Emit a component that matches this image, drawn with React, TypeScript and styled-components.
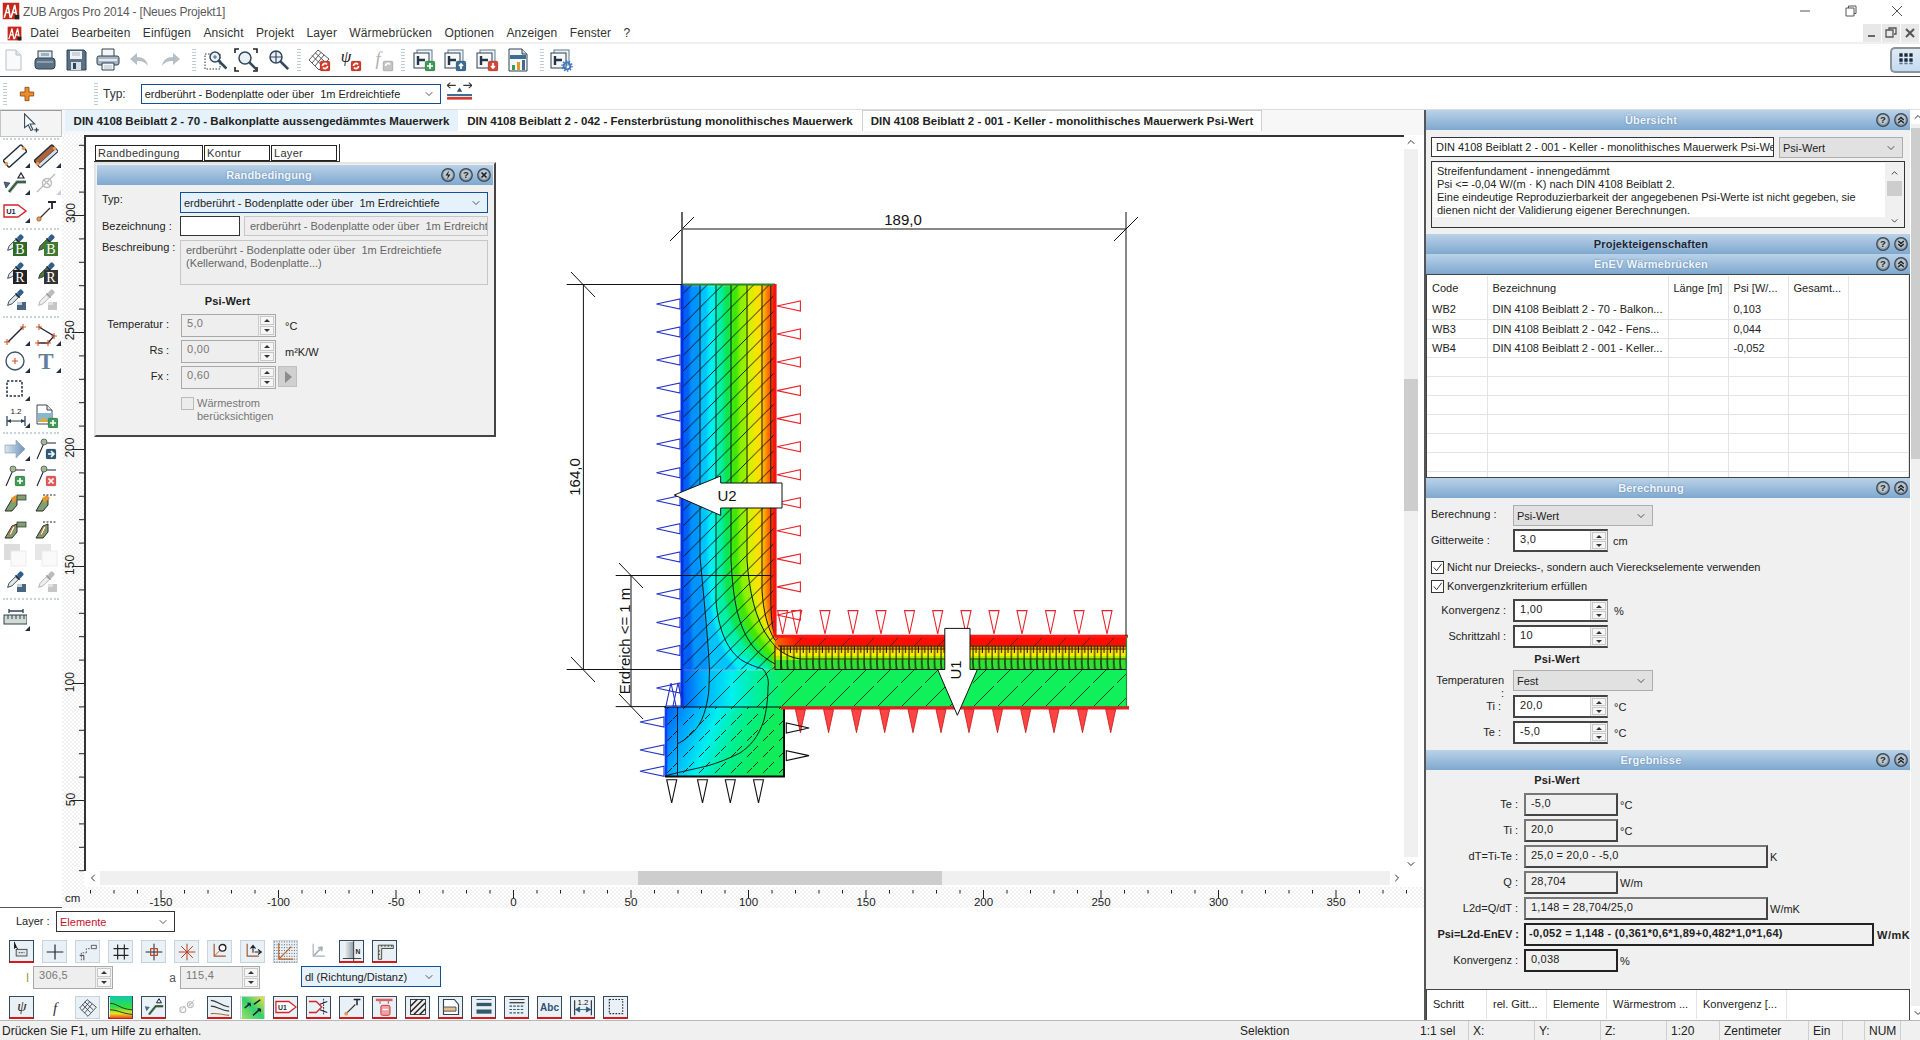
import React from "react";
import styled, { createGlobalStyle } from "styled-components";
import { ChevronDown, ChevronUp, ChevronLeft, ChevronRight } from "lucide-react";

const FONT = `"Liberation Sans", Arial, sans-serif`;

const Global = createGlobalStyle`
  html, body { margin: 0; padding: 0; background: #fff; overflow: hidden; }
  * { box-sizing: border-box; }
  body { font: 11px ${FONT}; color: #222; }
`;

/* ---------- shell ---------- */
const Root = styled.div`
  width: 1920px; height: 1040px; display: flex; flex-direction: column; overflow: hidden; background: #fff;
`;
const TitleBar = styled.div`
  height: 22px; flex: none; display: flex; align-items: center; padding-left: 2px;
`;
const TitleText = styled.span`
  margin-left: 3px; flex: 1; font-size: 12px; color: #5a5a5a; letter-spacing: -.2px; padding-top: 1px;
`;
const WinBtn = styled.div`
  width: 46px; height: 22px; display: flex; align-items: center; justify-content: center;
`;
const MenuBar = styled.div`
  height: 22px; flex: none; display: flex; align-items: center; padding: 2px 1px 0 7px; gap: 12.3px;
  border-bottom: 2px solid #f0f0f0; position: relative;
`;
const MenuLogo = styled.div`
  margin-right: -4px; width: 15px; height: 15px; flex: none;
`;
const MenuItem = styled.span`
  font-size: 12px; color: #333; letter-spacing: .12px;
`;
const MdiGroup = styled.div`
  margin-left: auto; display: flex; gap: 1px; align-self: flex-start;
`;
const MdiBtn = styled.div`
  width: 18px; height: 18px; background: #e8e8e8; display: flex; align-items: center; justify-content: center;
`;
const ToolBar = styled.div`
  height: 33px; flex: none; display: flex; align-items: center; padding-left: 1px;
  border-bottom: 1px solid #444;
`;
const ToolGroup = styled.div`
  display: flex; gap: 7.5px; align-items: center;
`;
const Gripper = styled.div<{ $l?: number; $r?: number }>`
  width: 4px; height: 24px; flex: none; margin-left: ${p => p.$l ?? 0}px; margin-right: ${p => p.$r ?? 0}px;
  background-image: radial-gradient(#c2ccd6 40%, transparent 45%);
  background-size: 2px 3px;
`;
const CalBtn = styled.div`
  margin-left: auto; width: 30px; height: 26px; border: 2px solid #8d9499; border-right: none; border-radius: 5px 0 0 5px;
  background: linear-gradient(#dfe9f3, #c3dbf2); display: flex; align-items: center; justify-content: center;
`;
const PropBar = styled.div`
  height: 33px; flex: none; display: flex; align-items: center; padding: 2px 0 0 3px;
  border-bottom: 1px solid #ddd;
`;
const PlusWrap = styled.div`
  width: 16px; height: 16px; margin: 0 0 0 12px;
`;
const PropLabel = styled.span`
  font-size: 12px; color: #333; margin: 0 15px 0 5px;
`;
const SwapWrap = styled.div`
  margin-left: 5px; flex: none;
`;

/* ---------- controls ---------- */
const Select = styled.div<{ $w: number; $h?: number; $tone?: "blue" | "focus" | "grey" | "dark" }>`
  width: ${p => p.$w}px; height: ${p => p.$h ?? 21}px; flex: none; display: flex; align-items: center;
  justify-content: space-between; padding: 0 5px 0 3px; font-size: 11px; color: #222;
  white-space: pre;
  border: ${p => (p.$tone === "grey" ? "1px solid #adadad" : p.$tone === "dark" ? "1px solid #333" : "1px solid #0f4f9e")};
  background: ${p => (p.$tone === "grey" ? "#e1e1e1" : p.$tone === "focus" ? "#e5f1fb" : "#fff")};
`;
const RedText = styled.span`
  color: #c8102e;
`;
const Spin = styled.div<{ $w?: number; $off?: boolean; $strong?: boolean }>`
  width: ${p => p.$w ?? 95}px; height: 23px; flex: none; display: flex;
  border: 1px solid ${p => (p.$off ? "#a8a8a8" : "#999")};
  ${p => (p.$strong ? "border-left: 2px solid #444; border-top: 2px solid #444; border-bottom: 2px solid #444;" : "")}
  background: ${p => (p.$off ? "#eeeeee" : "#fff")};
  color: ${p => (p.$off ? "#777" : "#222")};
`;
const SpinValue = styled.div`
  flex: 1; font-size: 11px; padding: 2px 0 0 5px; letter-spacing: .3px;
`;
const SpinBtns = styled.div`
  width: 17px; flex: none; display: flex; flex-direction: column; gap: 1px; background: #f0f0f0; border-left: 1px solid #ccc; padding: 1px;
`;
const SpinBtn = styled.div<{ $down?: boolean }>`
  flex: 1; background: #f6f6f6; border: 1px solid #c8c8c8; display: flex; align-items: center; justify-content: center;
  &::after {
    content: ""; width: 0; height: 0; border-left: 3px solid transparent; border-right: 3px solid transparent;
    ${p => (p.$down ? "border-top: 3px solid #333;" : "border-bottom: 3px solid #333;")}
  }
`;
const SpinBox: React.FC<{ v: string; w?: number; off?: boolean; strong?: boolean }> = ({ v, w, off, strong }) => (
  <Spin $w={w} $off={off} $strong={strong}>
    <SpinValue>{v}</SpinValue>
    <SpinBtns><SpinBtn /><SpinBtn $down /></SpinBtns>
  </Spin>
);
const Check = styled.div<{ $off?: boolean }>`
  width: 13px; height: 13px; flex: none; border: 1px solid ${p => (p.$off ? "#bbb" : "#333")};
  background: ${p => (p.$off ? "#ececec" : "#fff")}; display: flex; align-items: center; justify-content: center;
`;

/* ---------- layout ---------- */
const Body = styled.div`
  flex: 1; min-height: 0; display: flex;
`;
const LeftCol = styled.div`
  width: 1424px; flex: none; display: flex; flex-direction: column;
`;
const TabRow = styled.div`
  height: 25px; flex: none; display: flex; background: #f7f7f7;
`;
const PointerBtn = styled.div`
  width: 62px; height: 27px; flex: none; background: #f4f4f4; border: 1px solid #c4c4c4; border-top-color: #999;
  display: flex; align-items: center; justify-content: center; position: relative; z-index: 1;
`;
const Tab = styled.div<{ $w: number; $bg?: string; $active?: boolean }>`
  width: ${p => p.$w}px; height: 21px; flex: none; background: ${p => p.$bg ?? "#fff"}; font-weight: 700; font-size: 11.5px; color: #222;
  display: flex; align-items: center; justify-content: center; white-space: nowrap;
  ${p => (p.$active ? "border: 1px solid #cfcfcf; border-bottom: none;" : "")}
`;
const TabGap = styled.div`
  width: 3px; flex: none;
`;
const Work = styled.div`
  height: 752px; flex: none; display: flex;
`;
const VToolbar = styled.div`
  width: 62px; flex: none; padding-top: 3px; display: flex; flex-direction: column;
`;
const VSep = styled.div<{ $t?: number; $b?: number }>`
  height: 1px; flex: none; margin: ${p => p.$t ?? 2}px 3px ${p => p.$b ?? 2}px; border-top: 2px dotted #c6d2de;
`;
const VGrid = styled.div<{ $h?: number }>`
  display: grid; grid-template-columns: 30px 32px; grid-auto-rows: ${p => p.$h ?? 27.5}px; justify-items: center; align-items: center;
`;
const VCell = styled.div<{ $mark?: boolean; $dim?: boolean }>`
  width: 28px; height: 26px; display: flex; align-items: center; justify-content: center; position: relative;
  ${p => p.$mark ? `&::after {
    content: ""; position: absolute; right: -1px; bottom: 1px; width: 0; height: 0;
    border-left: 5px solid transparent; border-bottom: 5px solid ${p.$dim ? "#ccd" : "#1f2c44"};
  }` : ""}
`;
const RulerBg = styled.div`
  background-color: #fff;
  background-image: conic-gradient(#f2f2f2 25%, #fff 0 50%, #f2f2f2 0 75%, #fff 0);
  background-size: 4px 4px;
`;
const VRulerBox = styled(RulerBg)`
  width: 22px; flex: none;
`;
const CanvasCol = styled.div`
  flex: 1; display: flex; flex-direction: column; min-width: 0;
`;
const CanvasRow = styled.div`
  flex: 1; min-height: 0; display: flex; padding-right: 6px;
`;
const Canvas = styled.div`
  flex: 1; position: relative; background: #fff; border-left: 2px solid #333; border-top: 2px solid #333; overflow: hidden;
`;
const VScroll = styled.div`
  width: 14px; flex: none; display: flex; flex-direction: column; align-items: center; background: #fff; color: #333;
`;
const ScrollBtn = styled.div`
  height: 14px; width: 14px; flex: none; display: flex; align-items: center; justify-content: center;
`;
const Track = styled.div<{ $v?: boolean; $start: number; $len: number }>`
  flex: 1; position: relative; align-self: stretch; background: #f0f0f0;
  &::after {
    content: ""; position: absolute; background: #cdcdcd;
    ${p => p.$v
      ? `left: 0; right: 0; top: ${p.$start}px; height: ${p.$len}px;`
      : `top: 0; bottom: 0; left: ${p.$start}px; width: ${p.$len}px;`}
  }
`;
const HScroll = styled.div`
  height: 14px; flex: none; display: flex; margin: 0 20px 2px 2px; color: #333;
`;
const HRulerRow = styled.div`
  height: 21px; flex: none; display: flex;
`;
const RulerStub = styled.div`
  width: 62px; flex: none; border-bottom: 1px solid #555;
`;
const HRulerBox = styled(RulerBg)`
  flex: 1;
`;
const LayerRow = styled.div`
  height: 32px; flex: none; display: flex; align-items: flex-start; padding: 3px 0 0 16px;
`;
const LayerLabel = styled.span`
  font-size: 11px; margin: 4px 7px 0 0; color: #222; width: 33px; white-space: nowrap;
`;
const BtnRow = styled.div<{ $h: number }>`
  height: ${p => p.$h}px; flex: none; display: flex; align-items: flex-start; gap: 8px; padding-left: 9px;
  position: relative;
`;
const SmallBtn = styled.div<{ $on?: boolean; $flat?: boolean }>`
  width: 25px; height: 23px; flex: none; display: flex; align-items: center; justify-content: center;
  ${p => p.$flat ? "" : `background: #eaf1f6; border: 1px solid ${p.$on ? "#34495a" : "#c8d4dc"};`}
  ${p => (p.$on ? "border-bottom: 2px solid #d61a1a;" : "")}
`;
const InputRow = styled.div`
  height: 30px; flex: none; display: flex; align-items: flex-start;
`;
const InputTag = styled.span<{ $w: number; $c?: string }>`
  width: ${p => p.$w}px; flex: none; text-align: right; padding: 5px 4px 0 0; font-size: 12px; color: ${p => p.$c ?? "#555"};
`;

/* ---------- floating panel ---------- */
const Floating = styled.div`
  position: absolute; left: 8px; top: 7px; width: 402px; z-index: 2;
`;
const InnerTabs = styled.div`
  display: flex; gap: 1px; height: 18px; padding: 1px; border-right: 1px solid #333; border-bottom: 1px solid #333; width: 246px;
`;
const InnerTab = styled.div<{ $w: number }>`
  width: ${p => p.$w}px; height: 16px; flex: none; border: 1px solid #222; background: #fff; font-size: 11px; padding: 1px 2px; letter-spacing: .3px; color: #333;
`;
const Panel = styled.div`
  width: 402px; height: 275px; background: #f0f0f0; border: 2px solid #e4e4e4; border-right-color: #444; border-bottom-color: #444;
  padding: 1px; display: flex; flex-direction: column;
`;
const Header = styled.div<{ $h?: number }>`
  height: ${p => p.$h ?? 20}px; flex: none; display: flex; align-items: center; padding-right: 2px;
  background: linear-gradient(#bad2e8, #7fa8cf);
`;
const HeaderTitle = styled.div<{ $dark?: boolean }>`
  flex: 1; text-align: center; font-weight: 700; font-size: 11px;
  color: ${p => (p.$dark ? "#1c2733" : "#f0f5fa")};
  text-shadow: ${p => (p.$dark ? "0 0 2px #c8dbee" : "0 0 2px #5b82a8")};
  letter-spacing: .15px;
`;
const HeaderIcons = styled.div`
  display: flex; gap: 4px; align-items: center;
`;
const PanelBody = styled.div`
  padding: 7px 5px 0 5px; display: flex; flex-direction: column; color: #222;
`;
const PanelRow = styled.div<{ $t?: number }>`
  display: flex; align-items: flex-start; margin-top: ${p => p.$t ?? 0}px;
`;
const PanelLabel = styled.div<{ $w?: number; $right?: boolean; $t?: number }>`
  width: ${p => p.$w ?? 78}px; flex: none; padding-top: ${p => p.$t ?? 4}px; font-size: 11px;
  text-align: ${p => (p.$right ? "right" : "left")}; white-space: nowrap;
`;
const GreyField = styled.div<{ $w: number; $h?: number; $white?: boolean; $l?: number }>`
  width: ${p => p.$w}px; height: ${p => p.$h ?? 20}px; flex: none; overflow: hidden; white-space: pre;
  margin-left: ${p => p.$l ?? 0}px;
  border: 1px solid ${p => (p.$white ? "#333" : "#c6c6c6")}; background: ${p => (p.$white ? "#fff" : "#eeeeee")};
  color: #666; font-size: 11px; padding: 3px 5px; line-height: 13px;
`;
const BoldCenter = styled.div<{ $w: number; $t: number; $h?: number; $l?: number }>`
  width: ${p => p.$w}px; text-align: center; font-weight: 700; font-size: 11px; margin-top: ${p => p.$t}px;
  margin-left: ${p => p.$l ?? 0}px; height: ${p => p.$h ?? 13}px; line-height: 13px;
  letter-spacing: .15px;
`;
const UnitText = styled.span<{ $l?: number; $t?: number; $b?: boolean }>`
  margin-left: ${p => p.$l ?? 9}px; padding-top: ${p => p.$t ?? 6}px; font-size: 11px; color: #222; white-space: nowrap;
  font-weight: ${p => (p.$b ? 700 : 400)}; letter-spacing: ${p => (p.$b ? ".5px" : "0")};
`;
const DimNote = styled.div`
  margin-left: 3px; color: #777; font-size: 11px; line-height: 13px;
`;
const ArrowBtn = styled.div`
  width: 19px; height: 21px; margin-left: 2px; background: #d0d0d0; border: 1px solid #c0c0c0; display: flex; align-items: center; justify-content: center;
  &::after { content: ""; border-left: 7px solid #8c8c8c; border-top: 6px solid transparent; border-bottom: 6px solid transparent; margin-left: 2px; }
`;
const SpinIndent = styled.div`
  margin-left: 12px; display: flex;
`;
const CheckIndent = styled.div`
  margin-left: 79px;
`;
const SpinGap = styled.div<{ $w?: number }>`
  width: ${p => p.$w ?? 7}px; flex: none;
`;

/* ---------- right column ---------- */
const RightCol = styled.div`
  flex: 1; display: flex; border-left: 2px solid #555; min-width: 0;
`;
const Stack = styled.div`
  width: 484px; flex: none; display: flex; flex-direction: column; background: #f0f0f0; overflow: hidden;
`;
const RightScroll = styled.div`
  flex: 1; display: flex; flex-direction: column; color: #333; margin-left: 1px;
`;
const Section = styled.div<{ $h: number }>`
  height: ${p => p.$h}px; flex: none; overflow: hidden; position: relative;
`;
const OverviewTop = styled.div`
  display: flex; gap: 5px; padding: 7px 5px 0 5px;
`;
const TextField = styled.div`
  width: 343px; height: 20px; flex: none; background: #fff; border: 1px solid #333; padding: 3px 4px; font-size: 11px; overflow: hidden; white-space: nowrap; color: #222;
`;
const DescBox = styled.div`
  margin: 3px 5px 0 5px; height: 67px; display: flex; border: 1px solid #333; background: #f0f0f0; padding: 1px;
`;
const DescText = styled.div`
  flex: 1; height: 54px; background: #fff; padding: 2px 4px; font-size: 11px; line-height: 13px; color: #222; white-space: nowrap;
`;
const DescScroll = styled.div`
  width: 17px; flex: none; display: flex; flex-direction: column; align-items: center; margin-left: 1px;
`;
const MiniThumb = styled.div`
  width: 15px; height: 17px; background: #cdcdcd; margin-top: 3px;
`;
const DataTable = styled.table`
  width: 482px; table-layout: fixed; border-collapse: collapse; background: #fff; font-size: 11px; color: #222;
`;
const TableBox = styled.div<{ $h: number }>`
  height: ${p => p.$h}px; overflow: hidden; background: #fff; border: 1px solid #444; padding-top: 1px;
`;
const Th = styled.th<{ $w?: number }>`
  ${p => (p.$w ? `width: ${p.$w}px;` : "")}
  height: 24px; font-weight: 400; text-align: left; padding: 0 0 0 5px; border-right: 1px solid #e6e6e6; white-space: nowrap; overflow: hidden;
`;
const Td = styled.td`
  height: 19px; padding: 0 0 0 5px; border-right: 1px solid #e4e4e4; border-bottom: 1px solid #e4e4e4; white-space: nowrap; overflow: hidden;
`;
const FormRow = styled.div<{ $t?: number }>`
  display: flex; align-items: flex-start; padding-left: 5px; margin-top: ${p => p.$t ?? 0}px; color: #222;
`;
const FormLabel = styled.div<{ $w: number; $right?: boolean; $t?: number; $b?: boolean; $fix?: number }>`
  width: ${p => p.$w}px; flex: none; font-size: 11px; padding-top: ${p => p.$t ?? 5}px; line-height: 13px;
  ${p => (p.$fix ? `height: ${p.$fix}px;` : "")}
  text-align: ${p => (p.$right ? "right" : "left")}; font-weight: ${p => (p.$b ? 700 : 400)}; white-space: pre-line;
`;
const CheckLabel = styled.span`
  margin-left: 3px; font-size: 11px; line-height: 13px; white-space: nowrap;
`;
const ResultBox = styled.div<{ $w: number; $strong?: boolean; $l?: number; $plain?: boolean }>`
  width: ${p => p.$w}px; height: 23px; flex: none; padding: 2px 5px; font-size: 11px; letter-spacing: .2px;
  margin-left: ${p => p.$l ?? 6}px;
  border: 2px solid ${p => (p.$strong ? "#222" : "#777")}; ${p => p.$strong ? "" : "border-right-color:#444; border-bottom-color:#444;"}
  font-weight: ${p => (p.$strong && !p.$plain ? 700 : 400)}; white-space: nowrap; ${p => (p.$strong && !p.$plain ? "padding-left: 3px; letter-spacing: .28px;" : "")}
`;
const ColsHead = styled.div`
  height: 31px; flex: none; background: #fff; border-top: 1px solid #444; border-left: 1px solid #444; border-right: 1px solid #444; display: flex;
`;
const ColHead = styled.div<{ $w: number }>`
  width: ${p => p.$w}px; flex: none; padding: 8px 0 0 6px; height: 29px; font-size: 11px; border-right: 1px solid #e4e4e4; white-space: nowrap; color: #222;
`;

/* ---------- status ---------- */
const StatusBar = styled.div`
  height: 20px; flex: none; border-top: 1px solid #b8b8b8; background: #f0f0f0; display: flex; align-items: center; font-size: 12px; color: #222;
`;
const StatusCell = styled.div<{ $w: number; $line?: boolean }>`
  width: ${p => p.$w}px; flex: none; padding-left: ${p => (p.$line ? 4 : 2)}px; height: 19px; line-height: 20px; white-space: nowrap;
  ${p => (p.$line ? "border-left: 1px solid #cfcfcf;" : "")}
`;

/* ---------- icon helpers ---------- */
const Ic: React.FC<{ s?: number; vb?: string; children: React.ReactNode }> = ({ s = 24, vb = "0 0 24 24", children }) => (
  <svg width={s} height={s} viewBox={vb} style={{ display: "block", flex: "none" }}>{children}</svg>
);
const D = "#2f4354";
const M = "#5f7a90";
const Badge: React.FC<{ c: string; g?: string; x?: number; y?: number }> = ({ c, g, x = 13, y = 13 }) => (
  <g transform={`translate(${x} ${y})`}>
    <rect width="10" height="10" rx="1.5" fill={c} stroke="#0002" />
    {g && <path d={g} stroke="#fff" strokeWidth="1.7" fill="none" />}
  </g>
);
const PLUS = "M5 2v6M2 5h6";
const CROSS = "M2.5 2.5l5 5M7.5 2.5l-5 5";
const UPG = "M5 8V3M3 5l2-2 2 2";
const DNG = "M5 2v5M3 5l2 2 2-2";
const Stacked: React.FC<{ c: string; g?: string }> = ({ c, g }) => (
  <Ic>
    <rect x="5" y="2" width="15" height="15" fill="#eef2f5" stroke={M} />
    <rect x="2" y="5" width="15" height="15" fill="#f6f8fa" stroke={D} />
    <path d="M6 8v9M6 12h7" stroke="#263545" strokeWidth="2.4" fill="none" />
    <Badge c={c} g={g} />
  </Ic>
);
const Mesh: React.FC<{ c?: string }> = ({ c = "#444" }) => (
  <g stroke={c} strokeWidth=".9" fill="none">
    <path d="M11 2L22 11 12 22 2 12zM8 4.5L18 14M5 7.5L15 17.5M14 4.5L5 15M17 7L8 18" />
  </g>
);
const Pipette: React.FC<{ c?: string; c2?: string; ghost?: boolean }> = ({ c = "#2f5f8a", c2 = "#dfe8ef", ghost }) => (
  <g transform="rotate(45 11 11)">
    <rect x="8.5" y="-1" width="5" height="6" rx="1.5" fill={ghost ? "#bbb" : c} />
    <rect x="8" y="5" width="6" height="1.8" fill={ghost ? "#999" : "#17283a"} />
    <path d="M9 7h4v9l-2 4-2-4z" fill={ghost ? "#eee" : c2} stroke={ghost ? "#aaa" : "#233"} strokeWidth=".8" />
  </g>
);
const LetterBox: React.FC<{ bg: string; l: string }> = ({ bg, l }) => (
  <g>
    <rect x="10" y="9" width="14" height="14" fill={bg} />
    <text x="17" y="21" textAnchor="middle" fontFamily={"'Liberation Serif',serif"} fontSize="14" fill="#fff">{l}</text>
  </g>
);
const WallTool: React.FC<{ fill?: string }> = ({ fill = "#fff" }) => (
  <Ic>
    <g transform="rotate(-42 12 12)">
      <rect x="0" y="7.5" width="24" height="9" rx="1" fill={fill} stroke="#1f2f3e" strokeWidth="1.5" />
      {fill !== "#fff" && <rect x="0" y="13" width="24" height="3.5" fill="#d5e0ea" stroke="#1f2f3e" strokeWidth=".6" />}
      <circle cx="0.5" cy="12" r="1.8" fill="#e8964a" /><circle cx="23.5" cy="12" r="1.8" fill="#e8964a" />
    </g>
  </Ic>
);
const CornerTool = () => (
  <Ic>
    <path d="M6 21L14 11h9" stroke="#5f8a60" strokeWidth="3" fill="none" />
    <path d="M6 21L14 11h9" stroke="#1f2f3e" strokeWidth="1" fill="none" />
    <path d="M1 11l6 1-4 5z" fill="#446a8a" stroke="#223" strokeWidth=".6" />
    <path d="M18 2l3 5h-6z" fill="none" stroke="#223" strokeWidth="1.2" />
  </Ic>
);
const GreyRoll = () => (
  <Ic><g stroke="#bcbcbc" fill="none" strokeWidth="1.4"><circle cx="13" cy="12" r="4.5" /><path d="M3 21L21 3M10 9l6 6" /></g></Ic>
);
const TagU1: React.FC<{ s?: number }> = ({ s = 24 }) => (
  <Ic s={s} vb="0 0 24 16">
    <path d="M1 2h14l8 6-8 6H1z" fill="#fff" stroke="#d5222a" strokeWidth="1.4" />
    <text x="8" y="11" textAnchor="middle" fontFamily={FONT} fontWeight="700" fontSize="7.5" fill="#1c2a3a">U1</text>
  </Ic>
);
const TLead = () => (
  <Ic>
    <path d="M5 20L16 9" stroke="#333" strokeWidth="1.3" />
    <circle cx="5" cy="20" r="2.2" fill="#e8964a" stroke="#7a4a20" strokeWidth=".6" />
    <path d="M14 3h8M18 3v7" stroke="#223" strokeWidth="1.8" fill="none" />
  </Ic>
);
const PipB: React.FC<{ l: string; bg: string; alt?: boolean }> = ({ l, bg, alt }) => (
  <Ic>
    <Pipette c="#2f5f8a" c2={alt ? "#4a7a3a" : "#e6edf3"} />
    <LetterBox bg={bg} l={l} />
  </Ic>
);
const PipS: React.FC<{ ghost?: boolean }> = ({ ghost }) => (
  <Ic>
    <Pipette ghost={ghost} />
    <rect x="14" y="14" width="9" height="8" fill={ghost ? "#c6c6c6" : "#4a6580"} />
    <rect x="14" y="14" width="5" height="3" fill={ghost ? "#e0e0e0" : "#c4d0da"} />
  </Ic>
);
const SmallX: React.FC<{ x: number; y: number }> = ({ x, y }) => (
  <path d={`M${x - 3} ${y}h6M${x} ${y - 3}v6`} stroke="#d0562a" strokeWidth="1.1" />
);
const LineTool = () => (
  <Ic><path d="M5 20L20 5" stroke="#223" strokeWidth="1.4" /><SmallX x={4} y={20} /><SmallX x={20} y={5} /></Ic>
);
const PolyTool = () => (
  <Ic><path d="M5 5l15 9-6 7H4" stroke="#223" strokeWidth="1.3" fill="none" /><SmallX x={5} y={5} /><SmallX x={20} y={14} /><SmallX x={14} y={21} /><SmallX x={4} y={21} /></Ic>
);
const CircleTool = () => (
  <Ic><circle cx="12" cy="12" r="9" fill="#fff" stroke="#3d5568" strokeWidth="1.4" /><SmallX x={12} y={12} /></Ic>
);
const DashedRect = () => (
  <Ic><rect x="4" y="4" width="15" height="15" fill="none" stroke="#1f2f3e" strokeWidth="1.5" strokeDasharray="2.4 1.6" /></Ic>
);
const DimTool = () => (
  <Ic>
    <path d="M4 12v10M22 12v10M4 17h18" stroke="#2a3d4e" strokeWidth="1.2" />
    <path d="M4 17l4-2v4zM22 17l-4-2v4z" fill="#2a3d4e" />
    <text x="13" y="10" textAnchor="middle" fontFamily={FONT} fontSize="8" fill="#222">1.2</text>
  </Ic>
);
const ImageAdd = () => (
  <Ic>
    <path d="M3 1h10l5 5v14H3z" fill="#fff" stroke="#445" />
    <path d="M13 1v5h5" fill="#dde" stroke="#445" />
    <rect x="4" y="9" width="14" height="9" fill="#86b6d8" />
    <path d="M4 18l5-5 5 3 4-3v5z" fill="#d8b040" />
    <Badge c="#3f9a55" g={PLUS} x={14} y={14} />
  </Ic>
);
const BlueArrow = () => (
  <Ic>
    <defs><linearGradient id="ba" x1="0" x2="1"><stop offset="0" stopColor="#dbe6ef" /><stop offset="1" stopColor="#6d93b6" /></linearGradient></defs>
    <path d="M2 8h11V3l9 9-9 9v-5H2z" fill="url(#ba)" stroke="#7d9ab2" strokeWidth=".6" />
  </Ic>
);
const NodeLine: React.FC<{ c: string; g: string }> = ({ c, g }) => (
  <Ic>
    <path d="M3 22L10 6h12" stroke="#223" strokeWidth="1.1" fill="none" />
    <circle cx="10" cy="5" r="3" fill="#9dbb8c" stroke="#445" strokeWidth=".7" />
    <Badge c={c} g={g} x={12} y={12} />
  </Ic>
);
const Bend: React.FC<{ dashed?: boolean; slice?: boolean }> = ({ dashed, slice }) => (
  <Ic>
    <path d="M2 21l7-12 5-2v8l-5 6z" fill="#7f9f70" stroke="#2a2a2a" strokeWidth="1" />
    {slice ? <path d="M6 18l4-9 2 1-4 8z" fill="#fff" stroke="#b5602c" strokeWidth=".8" /> : <path d="M8 8l5-3 3 3-6 5z" fill="#e8942a" />}
    {dashed
      ? <path d="M9 5h14" stroke="#222" strokeDasharray="2 1.5" />
      : <rect x="14" y="5" width="9" height="5" fill="#7f9f70" stroke="#2a2a2a" strokeWidth=".7" />}
  </Ic>
);
const GhostSquares: React.FC<{ cut?: boolean }> = ({ cut }) => (
  <Ic>
    <rect x="1" y="1" width="16" height="16" fill={cut ? "#e6e6e6" : "#dcdcdc"} />
    <rect x="8" y="8" width="15" height="15" fill="#fafafa" stroke="#ececec" />
  </Ic>
);
const RulerTool = () => (
  <Ic>
    <path d="M6 4h14M6 2v4M20 2v4" stroke="#2f4354" strokeWidth="1.3" />
    <rect x="1" y="8" width="23" height="9" fill="#d2dad2" stroke="#2f4354" />
    <path d="M5 8v4M9 8v4M13 8v4M17 8v4M21 8v4" stroke="#2f4354" />
  </Ic>
);
const BigT = () => (
  <Ic>
    <text x="12" y="20" textAnchor="middle" fontFamily={"'Liberation Serif',serif"} fontWeight="700" fontSize="23" fill="#5f7f9c">T</text>
  </Ic>
);
const HIcon: React.FC<{ kind: "?" | "up" | "down" | "x" | "bolt" }> = ({ kind }) => (
  <svg width="14" height="14" viewBox="0 0 14 14" style={{ display: "block" }}>
    <circle cx="7" cy="7" r="6.3" fill="#8f9ca8" stroke="#3a4854" strokeWidth="1.2" />
    <circle cx="7" cy="6.6" r="4.6" fill="#bcc6ce" />
    {kind === "?" && <text x="7" y="10.3" textAnchor="middle" fontFamily={FONT} fontWeight="700" fontSize="9.5" fill="#1a2530">?</text>}
    {kind === "up" && <path d="M4.2 7l2.8-2.6L9.8 7M4.2 10l2.8-2.6L9.8 10" fill="none" stroke="#1a2530" strokeWidth="1.4" />}
    {kind === "down" && <path d="M4.2 4l2.8 2.6L9.8 4M4.2 7l2.8 2.6L9.8 7" fill="none" stroke="#1a2530" strokeWidth="1.4" />}
    {kind === "x" && <path d="M4.5 4.5l5 5M9.5 4.5l-5 5" fill="none" stroke="#1a2530" strokeWidth="1.7" />}
    {kind === "bolt" && <path d="M8 2.5L4.5 7.5h2.5L6 11.5l3.5-5H7z" fill="#1a2530" />}
  </svg>
);
const SectionHead: React.FC<{ title: string; dark?: boolean; collapsed?: boolean }> = ({ title, dark, collapsed }) => (
  <Header>
    <HeaderTitle $dark={dark}>{title}</HeaderTitle>
    <HeaderIcons><HIcon kind="?" /><HIcon kind={collapsed ? "down" : "up"} /></HeaderIcons>
  </Header>
);

/* ---------- top toolbar icons ---------- */
const NewDoc = () => <Ic><path d="M5 2h10l5 5v15H5z" fill="#f8fafb" stroke="#b5c1cb" /><path d="M15 2v5h5" fill="#dfe7ed" stroke="#b5c1cb" /></Ic>;
const OpenIco = () => <Ic><rect x="5" y="3" width="14" height="8" fill="#dfe6ec" stroke={D} /><rect x="8" y="5" width="8" height="3" fill="#9fb0bf" /><rect x="2" y="10" width="20" height="11" rx="3" fill="#5d7285" stroke={D} /><rect x="4" y="13" width="16" height="2" fill="#8a9fb0" /></Ic>;
const SaveIco = () => <Ic><path d="M3 2h17l2 2v18H3z" fill="#5b7084" stroke={D} /><rect x="6" y="3" width="12" height="8" fill="#eef2f5" /><path d="M8 5h8M8 7h8" stroke="#aab8c4" /><rect x="7" y="14" width="10" height="8" fill="#d6dee5" /><rect x="9" y="15" width="3" height="6" fill={D} /></Ic>;
const PrintIco = () => <Ic><path d="M6 1h12v8H6z" fill="#f4f6f8" stroke={D} /><rect x="1" y="8" width="22" height="9" rx="2" fill="#a9b5c0" stroke={D} /><rect x="3" y="11" width="18" height="2" fill="#e4e9ed" /><path d="M6 15h12v7H6z" fill="#f4f6f8" stroke={D} /><path d="M8 18h8M8 20h8" stroke="#b5c1cb" /></Ic>;
const UNDO = "M3 11l7-6v4c6 0 10 3 11 9-3-4-6-5-11-5v4z";
const UndoIco = () => <Ic><path d={UNDO} fill="#b6bec6" /></Ic>;
const RedoIco = () => <Ic><path d={UNDO} fill="#b6bec6" transform="matrix(-1 0 0 1 24 0)" /></Ic>;
const Mag: React.FC<{ x?: number; y?: number; r?: number }> = ({ x = 10, y = 10, r = 6 }) => (
  <g>
    <circle cx={x} cy={y} r={r} fill="#eaf1f6" stroke="#33485a" strokeWidth="1.5" />
    <path d={`M${x + r * 0.7} ${y + r * 0.7}L${x + r * 0.7 + 8} ${y + r * 0.7 + 8}`} stroke="#33485a" strokeWidth="2.6" />
  </g>
);
const Zoom1 = () => <Ic><rect x="2" y="6" width="15" height="15" fill="none" stroke="#333" strokeDasharray="1.5 1.5" /><Mag x={12} y={9} r={5} /><path d="M10 9h4M12 7v4" stroke="#45687f" /></Ic>;
const Zoom2 = () => <Ic><path d="M1 5V1h4M19 1h4v4M1 19v4h4M23 19v4h-4" stroke="#222" strokeWidth="1.6" fill="none" /><Mag x={11} y={10} r={6} /></Ic>;
const Zoom3 = () => <Ic><Mag x={10} y={9} r={6} /><path d="M10 3v12M4 9h12" stroke="#33485a" strokeWidth="1.2" /></Ic>;
const REFRESH = "M2.5 5a2.5 2.5 0 0 1 4.500-1.500M7.500 5a2.5 2.5 0 0 1-4.500 1.500";
const MeshIco = () => <Ic><Mesh /><Badge c="#d73c2c" g={REFRESH} /></Ic>;
const PsiIco = () => <Ic><text x="8" y="14" textAnchor="middle" fontFamily={"'Liberation Serif',serif"} fontStyle="italic" fontSize="17" fill="#222">ψ</text><Badge c="#d73c2c" g={REFRESH} /></Ic>;
const FnIco = () => <Ic><text x="8" y="17" textAnchor="middle" fontFamily={"'Liberation Serif',serif"} fontStyle="italic" fontSize="18" fill="#b0b0b0">f</text><Badge c="#c4c4c4" g="M2.5 5a2.5 2.5 0 0 1 4.5-1.5" /></Ic>;
const ChartDoc = () => <Ic><path d="M3 1h13l5 5v17H3z" fill="#f4f7fa" stroke={D} /><path d="M16 1v5h5" fill="#cdd9e2" stroke={D} /><rect x="4" y="7" width="16" height="4" fill="#3f6d92" /><rect x="6" y="17" width="3" height="5" fill="#3f9a55" /><rect x="11" y="14" width="3" height="8" fill="#e09a2a" /><rect x="16" y="12" width="3" height="10" fill="#3f6d92" /></Ic>;
const GearF = () => <Ic><rect x="5" y="2" width="15" height="15" fill="#eef2f5" stroke={M} /><rect x="2" y="5" width="15" height="15" fill="#f6f8fa" stroke={D} /><path d="M6 8v9M6 12h7" stroke="#263545" strokeWidth="2.4" /><circle cx="18" cy="18" r="3.4" fill="none" stroke="#3f78c4" strokeWidth="2" /><circle cx="18" cy="18" r="5" fill="none" stroke="#3f78c4" strokeWidth="1.4" strokeDasharray="1.5 1.6" /></Ic>;

/* ---------- bottom toolbar icons ---------- */
const Ax: React.FC<{ c?: string }> = ({ c = "#a8532a" }) => <path d="M5 2v15h14" stroke={c} strokeWidth="1.4" fill="none" />;
function CornerToolInner() {
  return (<g><path d="M6 21L14 11h9" stroke="#5f8a60" strokeWidth="3" fill="none" /><path d="M6 21L14 11h9" stroke="#111" strokeWidth=".8" fill="none" /><path d="M1 11l6 1-4 5z" fill="#446a8a" /><path d="M18 2l3 5h-6z" fill="none" stroke="#223" strokeWidth="1.2" /></g>);
}
function TLeadInner() {
  return (<g><path d="M5 20L16 9" stroke="#333" strokeWidth="1.3" /><circle cx="5" cy="20" r="2.2" fill="#e8964a" /><path d="M14 3h8M18 3v7" stroke="#223" strokeWidth="1.8" fill="none" /></g>);
}
const B1 = [
  <Ic s={20}><path d="M3 1v8l2-2 2 3" fill="#111" stroke="#111" /><rect x="5" y="10" width="13" height="8" fill="#dfe6ec" stroke="#333" /><path d="M8 14h7" stroke="#333" strokeDasharray="2 1" /></Ic>,
  <Ic s={20}><path d="M12 3v18M2 12h20" stroke="#223" strokeWidth="1.4" /></Ic>,
  <Ic s={20}><path d="M4 22v-9h6M10 13V8h4" stroke="#444" fill="none" strokeDasharray="2 1.5" /><path d="M16 4h6v4h-6z" stroke="#444" fill="none" /><path d="M2 16h5v6" stroke="#222" fill="none" /></Ic>,
  <Ic s={20}><path d="M8 3v18M16 3v18M3 8h18M3 16h18" stroke="#222" strokeWidth="1.4" /></Ic>,
  <Ic s={20}><path d="M12 2v20M2 12h20" stroke="#223" strokeWidth="1.2" /><rect x="8" y="8" width="8" height="8" fill="none" stroke="#b2401f" strokeWidth="1.4" /></Ic>,
  <Ic s={20}><path d="M12 2v20M2 12h20M5 5l14 14M19 5L5 19" stroke="#b2401f" strokeWidth="1.2" /></Ic>,
  <Ic s={20}><Ax /><circle cx="15" cy="7" r="4" fill="#fff" stroke="#222" strokeWidth="1.6" /><path d="M5 17L13 9" stroke="#a8532a" /></Ic>,
  <Ic s={20}><Ax /><path d="M12 5v8M9 8l3-4 3 4M14 12h7M18 9l4 3-4 3" stroke="#222" strokeWidth="1.3" fill="none" /></Ic>,
  <Ic s={23}><path d="M0 2h24M0 5h24M0 8h24M0 11h24M0 14h24M0 17h24M0 20h24M0 23h24" stroke="#555" strokeDasharray="1 1.6" /><path d="M5 3v17h15M5 20L18 7" stroke="#b5602c" strokeWidth="1.2" fill="none" /></Ic>,
  <Ic s={20}><Ax c="#a8b0b6" /><path d="M6 16L16 6M16 6l-5 1M16 6l-1 5" stroke="#a8b0b6" strokeWidth="2" fill="none" /></Ic>,
  <Ic s={20}><defs><linearGradient id="gc" x1="0" x2="1"><stop offset="0" stopColor="#f0f3f5" /><stop offset="1" stopColor="#8b9aa6" /></linearGradient></defs><rect x="3" y="1" width="11" height="20" fill="url(#gc)" /><path d="M14 0v24M1 21h22" stroke="#222" /><text x="19" y="15" textAnchor="middle" fontFamily={FONT} fontWeight="700" fontSize="8" fill="#222">N</text></Ic>,
  <Ic s={20}><path d="M4 5h18v4H8v13H4z" fill="#d5ddd6" stroke="#333" /><path d="M8 5v2M12 5v2M16 5v2M20 5v2M4 12h2M4 16h2" stroke="#333" /></Ic>,
];
const Map1 = () => <Ic s={22}><defs><linearGradient id="mp" x1="0" y1="0" x2="0" y2="1"><stop offset="0" stopColor="#10c8b0" /><stop offset=".5" stopColor="#30e040" /><stop offset=".8" stopColor="#f0e020" /><stop offset="1" stopColor="#e05020" /></linearGradient></defs><rect width="24" height="24" fill="url(#mp)" /><path d="M0 8c8 0 10 6 24 7M0 15c8 0 12 4 24 5" stroke="#223" fill="none" /></Ic>;
const Map2 = () => <Ic s={22}><defs><linearGradient id="mq" x1="0" y1="1" x2="1" y2="0"><stop offset="0" stopColor="#a0e060" /><stop offset=".5" stopColor="#30d070" /><stop offset="1" stopColor="#f0e040" /></linearGradient></defs><rect width="24" height="24" fill="url(#mq)" /><path d="M3 12l6-5M9 7l-3 0M9 7l0 3M12 20l8-7M20 13l-3 0M20 13l0 3M13 8l7-5" stroke="#123" strokeWidth="1.6" fill="none" /></Ic>;
const B2: { on?: boolean; flat?: boolean; n: React.ReactNode }[] = [
  { on: true, n: <Ic s={20}><text x="12" y="17" textAnchor="middle" fontFamily={"'Liberation Serif',serif"} fontStyle="italic" fontSize="18" fill="#222">ψ</text></Ic> },
  { flat: true, n: <Ic s={20}><text x="12" y="18" textAnchor="middle" fontFamily={"'Liberation Serif',serif"} fontStyle="italic" fontSize="18" fill="#333">f</text></Ic> },
  { n: <Ic s={20}><Mesh c="#223" /></Ic> },
  { on: true, n: <Map1 /> },
  { on: true, n: <Ic s={20}><CornerToolInner /></Ic> },
  { flat: true, n: <Ic s={20}><path d="M3 17l7-8M14 9l7-7" stroke="#bbb" /><circle cx="7" cy="14" r="3.5" fill="none" stroke="#bbb" strokeWidth="1.3" /><circle cx="16" cy="8" r="3.5" fill="none" stroke="#bbb" strokeWidth="1.3" /><path d="M14 6l4 4M18 6l-4 4" stroke="#bbb" /></Ic> },
  { on: true, n: <Ic s={20}><path d="M1 4c8 0 10 6 22 8M1 11c8 0 11 5 22 6" stroke="#2a3a30" strokeWidth="1.4" fill="none" /><path d="M1 20c8-1 12 1 22 2" stroke="#b06a2a" strokeWidth="1.4" fill="none" /></Ic> },
  { n: <Map2 /> },
  { on: true, n: <TagU1 s={22} /> },
  { on: true, n: <Ic s={22}><path d="M1 6h8l6 6-6 6H1" fill="none" stroke="#d5222a" strokeWidth="1.4" /><path d="M17 3v18" stroke="#223" strokeDasharray="2 1" /><path d="M13 9l8-3M13 15l8 3" stroke="#223" strokeWidth="1.2" /></Ic> },
  { on: true, n: <Ic s={20}><TLeadInner /></Ic> },
  { on: true, n: <Ic s={20}><path d="M1 2h20v3H1z" fill="#e06060" /><path d="M6 5v3M16 5v3" stroke="#444" /><rect x="7" y="10" width="11" height="12" rx="2" fill="#f0a0a0" stroke="#c02020" /><path d="M9 15h7" stroke="#fff" strokeWidth="1.6" /></Ic> },
  { on: true, n: <Ic s={20}><rect x="3" y="3" width="18" height="18" fill="#eee" stroke="#222" /><path d="M3 11L11 3M3 18L18 3M7 21L21 7M14 21l7-7" stroke="#222" strokeWidth="1.8" /></Ic> },
  { on: true, n: <Ic s={20}><path d="M3 3h13l5 6v12H3z" fill="#fff" stroke="#2f4354" strokeWidth="1.4" /><path d="M3 12h15v5H3z" fill="#e6c08c" stroke="#2f4354" /></Ic> },
  { on: true, n: <Ic s={20}><path d="M3 3h18" stroke="#2f4354" /><rect x="3" y="7" width="18" height="4" fill="#2f5a6a" /><rect x="3" y="15" width="18" height="5" fill="#2f5a6a" /></Ic> },
  { on: true, n: <Ic s={20}><path d="M3 3h18" stroke="#222" /><rect x="3" y="6" width="18" height="1.6" fill="#444" /><path d="M3 11h18M3 15h18M3 19h18" stroke="#2f5a6a" strokeWidth="1.4" strokeDasharray="3 1.5" /></Ic> },
  { on: true, n: <AbcMark>Abc</AbcMark> },
  { on: true, n: <Ic s={20}><text x="12" y="9" textAnchor="middle" fontFamily={FONT} fontSize="9.5" fill="#111">1.2</text><path d="M2 4v18M22 4v18" stroke="#223" strokeWidth="1.3" /><path d="M3 15h18M3 15l5-3v6zM21 15l-5-3v6z" stroke="#2a5a78" fill="#2a5a78" /></Ic> },
  { on: true, n: <Ic s={20}><rect x="4" y="3" width="16" height="17" fill="none" stroke="#1f2f3e" strokeWidth="1.4" strokeDasharray="2 1.6" /></Ic> },
];

/* ---------- rulers ---------- */
const VRuler = () => {
  const ticks: React.ReactNode[] = [];
  for (let i = -3; i < 32; i++) {
    const y = 215.5 + i * 23.4;
    const major = i % 5 === 0;
    ticks.push(<line key={i} x1={major ? 72 : 79} x2={84} y1={y} y2={y} stroke="#222" />);
  }
  const labels = ["300", "250", "200", "150", "100", "50"];
  return (
    <svg width="22" height="752" viewBox="62 135 22 752" style={{ display: "block" }}>
      {ticks}
      {labels.map((l, i) => {
        const y = 213 + i * 117.3;
        return <text key={l} x={74.5} y={y} transform={`rotate(-90 74.5 ${y})`} textAnchor="middle" fontFamily={FONT} fontSize="12" fill="#222">{l}</text>;
      })}
    </svg>
  );
};
const HRuler = () => {
  const ticks: React.ReactNode[] = [];
  for (let i = -18; i <= 38; i++) {
    const x = 513.5 + i * 23.5;
    const major = i % 5 === 0;
    ticks.push(<line key={i} x1={x} x2={x} y1={890} y2={major ? 898 : 893.5} stroke="#222" />);
  }
  const labels = [-150, -100, -50, 0, 50, 100, 150, 200, 250, 300, 350];
  return (
    <svg width="1362" height="21" viewBox="62 887 1362 21" style={{ display: "block" }}>
      <text x="65" y="902" fontFamily={FONT} fontSize="11.5" fill="#222">cm</text>
      {ticks}
      {labels.map(l => <text key={l} x={513.5 + (l / 10) * 23.5} y="905.5" textAnchor="middle" fontFamily={FONT} fontSize="11.5" fill="#222">{l}</text>)}
    </svg>
  );
};

/* ---------- thermal drawing ---------- */
const tri = (pts: number[][]) => pts.map(p => p.join(",")).join(" ");
type Iso = [number, number, number, number, number, number, number, number];
const ISO: Record<string, Iso> = {
  a: [700, 557, 705, 610, 708, 640, 709.5, 670],
  b: [716, 600, 718, 630, 728, 652, 766, 670],
  c: [731, 560, 733, 600, 738, 630, 775, 664],
  d: [747, 560, 749, 590, 755, 620, 775, 645],
  e: [762, 590, 763, 610, 768, 630, 775, 640],
  f: [770.8, 600, 771, 615, 772, 628, 775, 635],
};
const mix = (p: Iso, q: Iso, t: number) => p.map((v, i) => v + (q[i] - v) * t) as Iso;
const fillPath = (k: Iso) => `M680 284H${k[0]}V${k[1]}C${k[2]} ${k[3]} ${k[4]} ${k[5]} ${k[6]} ${k[7]}V672H680Z`;
const BANDS: [Iso, string][] = [
  [ISO.f, "#ff6a00"],
  [mix(ISO.e, ISO.f, 0.5), "#ffa800"],
  [ISO.e, "#ffe000"],
  [mix(ISO.d, ISO.e, 0.5), "#d8f000"],
  [ISO.d, "#90f000"],
  [mix(ISO.c, ISO.d, 0.5), "#40e800"],
  [ISO.c, "#08e650"],
  [mix(ISO.b, ISO.c, 0.5), "#00f0a8"],
  [ISO.b, "#00f0f0"],
  [mix(ISO.a, ISO.b, 0.5), "#00c4ff"],
  [ISO.a, "#0094ff"],
  [[690, 560, 691, 610, 692, 640, 693, 670], "#0060f4"],
];
const BLUE_Y = [304, 332, 360, 388, 416, 444, 472.8, 500.8, 528.8, 557, 594, 622.5, 650.5, 688];
const RED_Y = [306, 334, 362, 390.6, 418.6, 446.7, 474.7, 502.8, 530.8, 558.9, 586.9, 615];
const RED_DOWN = [782.6, 796.7, 825, 853, 881, 909.5, 937.7, 966, 994, 1022, 1050.5, 1079, 1107];
const RED_SPIKE = [800.4, 828.6, 856.5, 884.7, 913, 941, 969, 997.5, 1025.7, 1054, 1082.5, 1110.7];

const Drawing = () => (
  <svg width="1318" height="734" viewBox="86 137 1318 734" style={{ display: "block" }}>
    <defs>
      <linearGradient id="slabG" gradientUnits="userSpaceOnUse" x1="682" x2="800" y1="0" y2="0">
        <stop offset="0" stopColor="#0058f0" /><stop offset=".16" stopColor="#00a8ff" />
        <stop offset=".42" stopColor="#00f0f0" /><stop offset=".62" stopColor="#00f0a0" /><stop offset=".9" stopColor="#10f05a" /><stop offset="1" stopColor="#10f05a" />
      </linearGradient>
      <linearGradient id="footG" gradientUnits="userSpaceOnUse" x1="665" x2="785" y1="700" y2="745">
        <stop offset="0" stopColor="#0050f0" /><stop offset=".2" stopColor="#00a0ff" />
        <stop offset=".42" stopColor="#00f0f0" /><stop offset=".62" stopColor="#00f090" /><stop offset=".85" stopColor="#10ec5a" />
      </linearGradient>
      <linearGradient id="topG" gradientUnits="userSpaceOnUse" x1="775" x2="800" y1="0" y2="0">
        <stop offset="0" stopColor="#ff6a00" /><stop offset="1" stopColor="#ff0c00" />
      </linearGradient>
      <clipPath id="wallClip"><rect x="682" y="284.5" width="93" height="386" /></clipPath>
      <filter id="soft" x="-10%" y="-10%" width="120%" height="120%"><feGaussianBlur stdDeviation="1.8" /></filter>
      <pattern id="hatchWall" patternUnits="userSpaceOnUse" width="15.5" height="15.5">
        <path d="M15.5 0L0 15.5M-1 1L1 -1M14.5 16.5L16.5 14.5" stroke="#0a0a0a" strokeWidth=".9" />
      </pattern>
      <pattern id="hatchSlab" patternUnits="userSpaceOnUse" width="24" height="24">
        <path d="M24 0L13 11M10 14L0 24" stroke="#0a2a14" strokeWidth=".9" />
      </pattern>
      <pattern id="hatchFoot" patternUnits="userSpaceOnUse" width="16" height="16">
        <path d="M16 0L11 5M6 10L1 15" stroke="#0a0a0a" strokeWidth=".85" />
      </pattern>
      <pattern id="comb" patternUnits="userSpaceOnUse" x="780" y="646" width="6.4" height="24">
        <path d="M1 0v24M4 0v7" stroke="#111" strokeWidth="1" />
        <path d="M0 3h6M0 14l2.5 10" stroke="#111" strokeWidth=".6" />
      </pattern>
    </defs>

    {/* slab and foundation */}
    <rect x="682" y="669.5" width="444.5" height="37.5" fill="url(#slabG)" />
    <rect x="665" y="707" width="118.5" height="69.5" fill="url(#footG)" />

    {/* wall bands */}
    <g clipPath="url(#wallClip)">
      <g filter="url(#soft)">
        <rect x="680" y="280" width="100" height="395" fill="#ff1c00" />
        {BANDS.map(([k, c]) => <path key={c} d={fillPath(k)} fill={c} />)}
      </g>
    </g>
    <rect x="682" y="284.5" width="93" height="385" fill="url(#hatchWall)" />

    {/* slab layers */}
    <rect x="775" y="636" width="351.5" height="10" fill="url(#topG)" />
    <rect x="775" y="645.5" width="351.5" height="4.5" fill="#ff9800" />
    <rect x="775" y="650" width="351.5" height="6" fill="#ffe800" />
    <rect x="775" y="656" width="351.5" height="4" fill="#a8f000" />
    <rect x="775" y="660" width="351.5" height="9.5" fill="#30e030" />
    <rect x="780" y="646" width="346.5" height="23.5" fill="url(#comb)" />
    <path d="M778 646h348.500M775 669.5h351.500M781 646v24M775 646v24" stroke="#111" strokeWidth="1" />
    <rect x="775" y="636" width="351.5" height="10" fill="url(#hatchSlab)" opacity=".7" />
    <path d="M775 636.2h353" stroke="#ff1818" strokeWidth="3" />
    <rect x="682" y="669.5" width="444.5" height="37.5" fill="url(#hatchSlab)" />
    <rect x="665" y="707" width="118.5" height="69.5" fill="url(#hatchFoot)" />

    {/* isolines */}
    <g fill="none" stroke="#0a1a10" strokeWidth="1">
      <path d="M700 284V557C705 610 708 640 709.5 670C709 685 709 692 708 697C705 715 700 727 690 735C685 740 681 742 677 744" />
      <path d="M716 284V600C718 630 728 652 743 661C752 666 760 668 763 669C768 675 769 682 768 687C768 700 766 712 764 720C758 738 750 746 740 753C730 758 718 763 707 766C690 770 675 773 665 776" />
      <path d="M731 284V560C733 600 738 630 756 650C762 656 768 660 775 664" />
      <path d="M747 284V560C749 590 755 620 770 640C775 646 782 656 800 659H1126" />
      <path d="M762 284V590C763 610 768 630 775 640" />
      <path d="M770.8 284V600C771 615 772 628 775 635" />
    </g>

    {/* outlines */}
    <path d="M682 284.5H775" stroke="#1e8a2e" strokeWidth="2" />
    <path d="M682 284.5V707" stroke="#0030e8" strokeWidth="3" />
    <path d="M775 284V636" stroke="#f01414" strokeWidth="3.2" />
    <path d="M1126.5 636v71" stroke="#1f8a3a" strokeWidth="1.2" />
    <path d="M666 707v69.5" stroke="#0a40ff" strokeWidth="2.6" />
    <path d="M677.5 707v69.5" stroke="#0a1a30" strokeWidth="1" />
    <path d="M665 776.5H784V707" fill="none" stroke="#0a0a0a" strokeWidth="2" />
    <path d="M664 707h120" stroke="#0a0a0a" strokeWidth="1" />
    <path d="M781 706.5h348" stroke="#1fa040" strokeWidth="1" />
    <path d="M781 708h348" stroke="#ee1c1c" strokeWidth="3" />

    {/* load triangles */}
    <g fill="none" stroke="#2030c8" strokeWidth="1.1">
      {BLUE_Y.map(y => <polygon key={y} points={tri([[656.5, y], [680, y - 5], [680, y + 5]])} />)}
      {[722, 750, 771.3].map(y => <polygon key={y} points={tri([[640, y], [664, y - 5], [664, y + 5]])} />)}
      {[671, 678].map(x => <polygon key={x} points={tri([[x, 683], [x - 5, 706], [x + 5, 706]])} />)}
    </g>
    <g fill="none" stroke="#e8222a" strokeWidth="1.1">
      {RED_Y.map(y => <polygon key={y} points={tri([[777, y], [800.4, y - 5], [800.4, y + 5]])} />)}
      {RED_DOWN.map(x => <polygon key={x} points={tri([[x - 5, 610.6], [x + 5, 610.6], [x, 634]])} />)}
    </g>
    <g fill="#ff4444" stroke="#c01818" strokeWidth=".8">
      {RED_SPIKE.map(x => <polygon key={x} points={tri([[x - 5, 709.4], [x + 5, 709.4], [x, 732.7]])} />)}
    </g>
    <g fill="#fff" stroke="#111" strokeWidth="1.1">
      {[728, 755.6].map(y => <polygon key={y} points={tri([[786.3, y - 5], [786.3, y + 5], [809, y]])} fill={y === 728 ? "none" : "#fff"} />)}
      {[671.7, 702.5, 730.3, 758.5].map(x => <polygon key={x} points={tri([[x - 5, 779.7], [x + 5, 779.7], [x, 803]])} />)}
    </g>

    {/* U arrows */}
    <polygon points="674.3,495 720.7,476 720.7,483 782,483 782,508 720.7,508 720.7,515.4" fill="#fff" stroke="#111" />
    <text x="727" y="500.5" textAnchor="middle" fontFamily={FONT} fontSize="15" fill="#111">U2</text>
    <polygon points="944.8,628.4 970,628.4 970,669.5 977.4,669.5 957.4,715.3 937.7,669.5 944.8,669.5" fill="#fff" stroke="#111" />
    <text x="955.5" y="670" transform="rotate(-90 955.5 670)" textAnchor="middle" dominantBaseline="central" fontFamily={FONT} fontSize="15" fill="#111">U1</text>

    {/* dimensions */}
    <g stroke="#111" strokeWidth="1" fill="none">
      <path d="M682 229H1126M1126 212V636" />
      <path d="M670 241L694 217M1114 241L1138 217" />
      <path d="M566.7 284.5H682M566.7 669.5H682M583.4 284.5V669.5" />
      <path d="M571 272L595 297M571 657L595 682" />
      <path d="M615.7 575.5H771M615.7 706.6H666M631 575.5V706.6" />
      <path d="M619 563L643 588M619 694L643 719" />
    </g>
    <path d="M682 212V284" stroke="#555" strokeWidth="1.8" />
    <text x="903" y="225" textAnchor="middle" fontFamily={FONT} fontSize="15" fill="#111">189,0</text>
    <text x="580" y="477" transform="rotate(-90 580 477)" textAnchor="middle" fontFamily={FONT} fontSize="15" fill="#111">164,0</text>
    <text x="630" y="641" transform="rotate(-90 630 641)" textAnchor="middle" fontFamily={FONT} fontSize="15" fill="#111">Erdreich &lt;= 1 m</text>
  </svg>
);

/* ---------- data ---------- */
const MENU = ["Datei", "Bearbeiten", "Einfügen", "Ansicht", "Projekt", "Layer", "Wärmebrücken", "Optionen", "Anzeigen", "Fenster", "?"];
const ROWS = [
  ["WB2", "DIN 4108 Beiblatt 2 - 70 - Balkon...", "0,103"],
  ["WB3", "DIN 4108 Beiblatt 2 - 042 - Fens...", "0,044"],
  ["WB4", "DIN 4108 Beiblatt 2 - 001 - Keller...", "-0,052"],
  ["", "", ""], ["", "", ""], ["", "", ""], ["", "", ""], ["", "", ""], ["", "", ""], ["", "", ""],
];
const RESULTS: [string, string, number, string][] = [
  ["Te :", "-5,0", 94, "°C"],
  ["Ti :", "20,0", 94, "°C"],
  ["dT=Ti-Te :", "25,0 = 20,0 - -5,0", 244, "K"],
  ["Q :", "28,704", 94, "W/m"],
  ["L2d=Q/dT :", "1,148 = 28,704/25,0", 244, "W/mK"],
];
const LogoMark: React.FC<{ s?: number }> = ({ s = 18 }) => (
  <Ic s={s}>
    <rect x="1" y="1" width="22" height="22" fill="#c8281c" />
    <path d="M3 21L8 4l3 17M12 21l5-17 3 17M5 14h4M14 14h4" stroke="#fff" strokeWidth="2" fill="none" />
    <rect x="17" y="17" width="6" height="6" fill="#222" />
  </Ic>
);
const TickMark = () => (
  <Ic s={11} vb="0 0 12 12"><path d="M2 6l3 3.500L10.500 2" fill="none" stroke="#222" /></Ic>
);
const Dropdown = () => <ChevronDown size={12} strokeWidth={1.5} />;

export default function App() {
  return (
    <Root>
      <Global />
      <TitleBar>
        <LogoMark />
        <TitleText>ZUB Argos Pro 2014 - [Neues Projekt1]</TitleText>
        <WinBtn><Ic s={12} vb="0 0 12 12"><path d="M1 6h10" stroke="#555" /></Ic></WinBtn>
        <WinBtn><Ic s={12} vb="0 0 12 12"><path d="M3.5 3V1h7.5v7.5H9M1 3h8v8H1z" fill="none" stroke="#555" /></Ic></WinBtn>
        <WinBtn><Ic s={12} vb="0 0 12 12"><path d="M1 1l10 10M11 1L1 11" stroke="#555" /></Ic></WinBtn>
      </TitleBar>
      <MenuBar>
        <MenuLogo><LogoMark s={15} /></MenuLogo>
        {MENU.map(m => <MenuItem key={m}>{m}</MenuItem>)}
        <MdiGroup>
          <MdiBtn><Ic s={12} vb="0 0 12 12"><path d="M2 9h7" stroke="#666" strokeWidth="2" /></Ic></MdiBtn>
          <MdiBtn><Ic s={12} vb="0 0 12 12"><path d="M4 3V1h7v6H9M1 3h7v7H1z" fill="none" stroke="#555" strokeWidth="1.3" /></Ic></MdiBtn>
          <MdiBtn><Ic s={12} vb="0 0 12 12"><path d="M2 2l8 8M10 2l-8 8" stroke="#555" strokeWidth="2" /></Ic></MdiBtn>
        </MdiGroup>
      </MenuBar>
      <ToolBar>
        <ToolGroup><NewDoc /><OpenIco /><SaveIco /><PrintIco /><UndoIco /><RedoIco /></ToolGroup>
        <Gripper $l={9} $r={7} />
        <ToolGroup><Zoom1 /><Zoom2 /><Zoom3 /></ToolGroup>
        <Gripper $l={7} $r={6} />
        <ToolGroup><MeshIco /><PsiIco /><FnIco /></ToolGroup>
        <Gripper $l={7} $r={7} />
        <ToolGroup><Stacked c="#3f9a55" g={PLUS} /><Stacked c="#3f6d92" g={UPG} /><Stacked c="#d2493a" g={DNG} /><ChartDoc /></ToolGroup>
        <Gripper $l={10} $r={5} />
        <GearF />
        <CalBtn>
          <Ic s={20}><path d="M3 5h18M3 10h18M3 15h18" stroke="#fff" strokeWidth="1" /><path d="M4 4h4v4H4zM10 4h4v4h-4zM16 4h4v4h-4zM4 10h4v4H4zM10 10h4v4h-4zM16 10h4v4h-4z" fill="#1a2a3a" /><path d="M4 16h16" stroke="#5a7a9a" strokeWidth="2" strokeDasharray="4 2" /></Ic>
        </CalBtn>
      </ToolBar>
      <PropBar>
        <Gripper />
        <PlusWrap><Ic s={16}><path d="M9 2h6v7h7v6h-7v7H9v-7H2V9h7z" fill="#ee8a2c" stroke="#7a4510" strokeWidth="1.2" /></Ic></PlusWrap>
        <Gripper $l={59} />
        <PropLabel>Typ:</PropLabel>
        <Select $w={300} $h={20} $tone="blue">
          {"erdberührt - Bodenplatte oder über  1m Erdreichtiefe"}
          <Dropdown />
        </Select>
        <SwapWrap>
          <Ic s={26}>
            <path d="M1 4h8M1 4l3-2.5M1 4l3 2.5M24 4h-8M24 4l-3-2.5M24 4l-3 2.5" stroke="#333" fill="none" />
            <path d="M12.5 6l2.5 4h-5z" fill="#33506e" />
            <path d="M1 13h23" stroke="#3f6d92" strokeWidth="2" /><path d="M1 16h23" stroke="#d2392a" strokeWidth="2.4" />
          </Ic>
        </SwapWrap>
      </PropBar>
      <Body>
        <LeftCol>
          <TabRow>
            <PointerBtn>
              <Ic s={22}><path d="M5 1v15l4-3 3 6 2-1-3-6h5z" fill="#fff" stroke="#34495a" strokeWidth="1.2" /><path d="M18 16v5M15.500 18.500h5" stroke="#34495a" strokeWidth="1.4" /></Ic>
            </PointerBtn>
            <TabGap />
            <Tab $w={393} $bg="#e5f1fb">DIN 4108 Beiblatt 2 - 70 - Balkonplatte aussengedämmtes Mauerwerk</Tab>
            <Tab $w={404}>DIN 4108 Beiblatt 2 - 042 - Fensterbrüstung monolithisches Mauerwerk</Tab>
            <Tab $w={400} $active>DIN 4108 Beiblatt 2 - 001 - Keller - monolithisches Mauerwerk Psi-Wert</Tab>
          </TabRow>
          <Work>
            <VToolbar>
              <VSep $t={0} $b={2} />
              <VGrid>
                <VCell $mark><WallTool /></VCell><VCell $mark><WallTool fill="#b0623a" /></VCell>
                <VCell $mark><CornerTool /></VCell><VCell $mark $dim><GreyRoll /></VCell>
                <VCell $mark><TagU1 /></VCell><VCell><TLead /></VCell>
              </VGrid>
              <VSep $t={3} />
              <VGrid>
                <VCell><PipB l="B" bg="#2f6a25" /></VCell><VCell><PipB l="B" bg="#3f7a30" alt /></VCell>
                <VCell><PipB l="R" bg="#222" /></VCell><VCell><PipB l="R" bg="#333" alt /></VCell>
                <VCell><PipS /></VCell><VCell><PipS ghost /></VCell>
              </VGrid>
              <VSep />
              <VGrid>
                <VCell $mark><LineTool /></VCell><VCell $mark><PolyTool /></VCell>
                <VCell $mark><CircleTool /></VCell><VCell $mark><BigT /></VCell>
                <VCell $mark><DashedRect /></VCell><VCell />
                <VCell $mark><DimTool /></VCell><VCell><ImageAdd /></VCell>
              </VGrid>
              <VSep $b={2} />
              <VGrid $h={26.5}>
                <VCell $mark><BlueArrow /></VCell><VCell><NodeLine c="#2f5a78" g="M2 5h6M5 2l3 3-3 3" /></VCell>
                <VCell><NodeLine c="#3f9a55" g={PLUS} /></VCell><VCell><NodeLine c="#e85a5a" g={CROSS} /></VCell>
                <VCell><Bend /></VCell><VCell><Bend dashed /></VCell>
                <VCell><Bend slice /></VCell><VCell><Bend slice dashed /></VCell>
                <VCell><GhostSquares /></VCell><VCell><GhostSquares cut /></VCell>
                <VCell><PipS /></VCell><VCell><PipS ghost /></VCell>
              </VGrid>
              <VSep $t={3} $b={5} />
              <VGrid>
                <VCell $mark><RulerTool /></VCell>
              </VGrid>
            </VToolbar>
            <VRulerBox><VRuler /></VRulerBox>
            <CanvasCol>
              <CanvasRow>
                <Canvas>
                  <Drawing />
                  <Floating>
                    <InnerTabs>
                      <InnerTab $w={108}>Randbedingung</InnerTab>
                      <InnerTab $w={66}>Kontur</InnerTab>
                      <InnerTab $w={66}>Layer</InnerTab>
                    </InnerTabs>
                    <Panel>
                      <Header>
                        <HeaderTitle>Randbedingung</HeaderTitle>
                        <HeaderIcons><HIcon kind="bolt" /><HIcon kind="?" /><HIcon kind="x" /></HeaderIcons>
                      </Header>
                      <PanelBody>
                        <PanelRow>
                          <PanelLabel $t={1}>Typ:</PanelLabel>
                          <Select $w={308} $tone="focus">
                            {"erdberührt - Bodenplatte oder über  1m Erdreichtiefe"}
                            <Dropdown />
                          </Select>
                        </PanelRow>
                        <PanelRow $t={3}>
                          <PanelLabel>Bezeichnung :</PanelLabel>
                          <GreyField $w={60} $white />
                          <GreyField $w={244} $l={4}>{"erdberührt - Bodenplatte oder über  1m Erdreichti"}</GreyField>
                        </PanelRow>
                        <PanelRow $t={4}>
                          <PanelLabel $t={1}>Beschreibung :</PanelLabel>
                          <GreyField $w={308} $h={45}>{"erdberührt - Bodenplatte oder über  1m Erdreichtiefe\n(Kellerwand, Bodenplatte...)"}</GreyField>
                        </PanelRow>
                        <BoldCenter $w={251} $t={10}>Psi-Wert</BoldCenter>
                        <PanelRow $t={6}>
                          <PanelLabel $w={67} $right>Temperatur :</PanelLabel>
                          <SpinIndent><SpinBox v="5,0" off /></SpinIndent>
                          <UnitText>°C</UnitText>
                        </PanelRow>
                        <PanelRow $t={3}>
                          <PanelLabel $w={67} $right>Rs :</PanelLabel>
                          <SpinIndent><SpinBox v="0,00" off /></SpinIndent>
                          <UnitText>m²K/W</UnitText>
                        </PanelRow>
                        <PanelRow $t={3}>
                          <PanelLabel $w={67} $right>Fx :</PanelLabel>
                          <SpinIndent><SpinBox v="0,60" off /></SpinIndent>
                          <ArrowBtn />
                        </PanelRow>
                        <PanelRow $t={8}>
                          <CheckIndent><Check $off /></CheckIndent>
                          <DimNote>Wärmestrom<br />berücksichtigen</DimNote>
                        </PanelRow>
                      </PanelBody>
                    </Panel>
                  </Floating>
                </Canvas>
                <VScroll>
                  <ScrollBtn><ChevronUp size={12} strokeWidth={2} /></ScrollBtn>
                  <Track $v $start={230} $len={132} />
                  <ScrollBtn><ChevronDown size={12} strokeWidth={2} /></ScrollBtn>
                </VScroll>
              </CanvasRow>
              <HScroll>
                <ScrollBtn><ChevronLeft size={12} strokeWidth={2} /></ScrollBtn>
                <Track $start={538} $len={304} />
                <ScrollBtn><ChevronRight size={12} strokeWidth={2} /></ScrollBtn>
              </HScroll>
            </CanvasCol>
          </Work>
          <HRulerRow>
            <RulerStub />
            <HRulerBox><HRuler /></HRulerBox>
          </HRulerRow>
          <LayerRow>
            <LayerLabel>Layer :</LayerLabel>
            <Select $w={119} $tone="dark"><RedText>Elemente</RedText><Dropdown /></Select>
          </LayerRow>
          <BtnRow $h={26}>
            {B1.map((n, i) => <SmallBtn key={i} $on={i === 0 || i >= 10} $flat={i === 9}>{n}</SmallBtn>)}
          </BtnRow>
          <InputRow>
            <InputTag $w={33} $c="#a08a3a">l</InputTag>
            <SpinBox v="306,5" w={80} off />
            <InputTag $w={67}>a</InputTag>
            <SpinBox v="115,4" w={80} off />
            <SelectGap><Select $w={140} $tone="focus">dl (Richtung/Distanz)<Dropdown /></Select></SelectGap>
          </InputRow>
          <BtnRow $h={24}>
            {B2.map((b, i) => <SmallBtn key={i} $on={b.on} $flat={b.flat}>{b.n}</SmallBtn>)}
          </BtnRow>
        </LeftCol>
        <RightCol>
          <Stack>
            <SectionHead title="Übersicht" />
            <Section $h={104}>
              <OverviewTop>
                <TextField>DIN 4108 Beiblatt 2 - 001 - Keller - monolithisches Mauerwerk Psi-Wert</TextField>
                <Select $w={124} $tone="grey">Psi-Wert<Dropdown /></Select>
              </OverviewTop>
              <DescBox>
                <DescText>
                  Streifenfundament - innengedämmt<br />
                  Psi &lt;= -0,04 W/(m · K) nach DIN 4108 Beiblatt 2.<br />
                  Eine eindeutige Reproduzierbarkeit der angegebenen Psi-Werte ist nicht gegeben, sie<br />
                  dienen nicht der Validierung eigener Berechnungen.
                </DescText>
                <DescScroll>
                  <ChevronUp size={11} strokeWidth={2} style={{ marginTop: 5 }} />
                  <MiniThumb />
                  <ChevronDown size={11} strokeWidth={2} style={{ marginTop: 20 }} />
                </DescScroll>
              </DescBox>
            </Section>
            <SectionHead title="Projekteigenschaften" dark collapsed />
            <SectionHead title="EnEV Wärmebrücken" />
            <TableBox $h={204}>
              <DataTable>
                <thead>
                  <tr>
                    <Th $w={60}>Code</Th><Th $w={181}>Bezeichnung</Th><Th $w={60}>Länge [m]</Th><Th $w={60}>Psi [W/...</Th><Th $w={60}>Gesamt...</Th><Th />
                  </tr>
                </thead>
                <tbody>
                  {ROWS.map((r, i) => (
                    <tr key={i}><Td>{r[0]}</Td><Td>{r[1]}</Td><Td /><Td>{r[2]}</Td><Td /><Td /></tr>
                  ))}
                </tbody>
              </DataTable>
            </TableBox>
            <SectionHead title="Berechnung" />
            <Section $h={252}>
              <FormRow $t={7}>
                <FormLabel $w={82} $t={3}>Berechnung :</FormLabel>
                <Select $w={140} $tone="grey">Psi-Wert<Dropdown /></Select>
              </FormRow>
              <FormRow $t={3}>
                <FormLabel $w={82}>Gitterweite :</FormLabel>
                <SpinBox v="3,0" strong />
                <UnitText $l={5} $t={6}>cm</UnitText>
              </FormRow>
              <FormRow $t={9}>
                <Check><TickMark /></Check>
                <CheckLabel>Nicht nur Dreiecks-, sondern auch Viereckselemente verwenden</CheckLabel>
              </FormRow>
              <FormRow $t={6}>
                <Check><TickMark /></Check>
                <CheckLabel>Konvergenzkriterium erfüllen</CheckLabel>
              </FormRow>
              <FormRow $t={6}>
                <FormLabel $w={75} $right>Konvergenz :</FormLabel>
                <SpinGap />
                <SpinBox v="1,00" strong />
                <UnitText $l={6} $t={6}>%</UnitText>
              </FormRow>
              <FormRow $t={3}>
                <FormLabel $w={75} $right>Schrittzahl :</FormLabel>
                <SpinGap />
                <SpinBox v="10" strong />
              </FormRow>
              <FormRow $t={5}>
                <BoldCenter $w={170} $t={0} $l={41} $h={17}>Psi-Wert</BoldCenter>
              </FormRow>
              <FormRow>
                <FormLabel $w={73} $right $t={4} $fix={21}>{"Temperaturen\n:"}</FormLabel>
                <SpinGap $w={9} />
                <Select $w={140} $tone="grey">Fest<Dropdown /></Select>
              </FormRow>
              <FormRow $t={4}>
                <FormLabel $w={70} $right>Ti :</FormLabel>
                <SpinGap $w={12} />
                <SpinBox v="20,0" strong />
                <UnitText $l={6} $t={6}>°C</UnitText>
              </FormRow>
              <FormRow $t={3}>
                <FormLabel $w={70} $right>Te :</FormLabel>
                <SpinGap $w={12} />
                <SpinBox v="-5,0" strong />
                <UnitText $l={6} $t={6}>°C</UnitText>
              </FormRow>
            </Section>
            <SectionHead title="Ergebnisse" />
            <Section $h={219}>
              <FormRow>
                <BoldCenter $w={170} $t={4} $l={41} $h={16}>Psi-Wert</BoldCenter>
              </FormRow>
              {RESULTS.map(([l, v, w, u]) => (
                <FormRow key={l} $t={3}>
                  <FormLabel $w={87} $right>{l}</FormLabel>
                  <ResultBox $w={w}>{v}</ResultBox>
                  <UnitText $l={2}>{u}</UnitText>
                </FormRow>
              ))}
              <FormRow $t={3}>
                <FormLabel $w={88} $right $b>Psi=L2d-EnEV :</FormLabel>
                <ResultBox $w={350} $strong $l={5}>-0,052 = 1,148 - (0,361*0,6*1,89+0,482*1,0*1,64)</ResultBox>
                <UnitText $l={3} $b>W/mK</UnitText>
              </FormRow>
              <FormRow $t={3}>
                <FormLabel $w={87} $right>Konvergenz :</FormLabel>
                <ResultBox $w={94} $strong $plain>0,038</ResultBox>
                <UnitText $l={2}>%</UnitText>
              </FormRow>
            </Section>
            <ColsHead>
              <ColHead $w={60}>Schritt</ColHead>
              <ColHead $w={60}>rel. Gitt...</ColHead>
              <ColHead $w={60}>Elemente</ColHead>
              <ColHead $w={90}>Wärmestrom ...</ColHead>
              <ColHead $w={90}>Konvergenz [...</ColHead>
            </ColsHead>
          </Stack>
          <RightScroll>
            <ScrollBtn><ChevronUp size={12} strokeWidth={2} /></ScrollBtn>
            <Track $v $start={4} $len={331} />
            <ScrollBtn><ChevronDown size={12} strokeWidth={2} /></ScrollBtn>
          </RightScroll>
        </RightCol>
      </Body>
      <StatusBar>
        <StatusCell $w={1238}>Drücken Sie F1, um Hilfe zu erhalten.</StatusCell>
        <StatusCell $w={180}>Selektion</StatusCell>
        <StatusCell $w={50}>1:1 sel</StatusCell>
        <StatusCell $w={66} $line>X:</StatusCell>
        <StatusCell $w={66} $line>Y:</StatusCell>
        <StatusCell $w={66} $line>Z:</StatusCell>
        <StatusCell $w={53} $line>1:20</StatusCell>
        <StatusCell $w={89} $line>Zentimeter</StatusCell>
        <StatusCell $w={34} $line>Ein</StatusCell>
        <StatusCell $w={22} $line />
        <StatusCell $w={36} $line>NUM</StatusCell>
        <StatusCell $w={20} $line />
      </StatusBar>
    </Root>
  );
}

const SelectGap = styled.div`
  margin-left: 41px;
`;
function AbcMark({ children }: { children: React.ReactNode }) {
  return <AbcText>{children}</AbcText>;
}
const AbcText = styled.span`
  font: 700 10px ${FONT}; color: #2f4f78;
`;
